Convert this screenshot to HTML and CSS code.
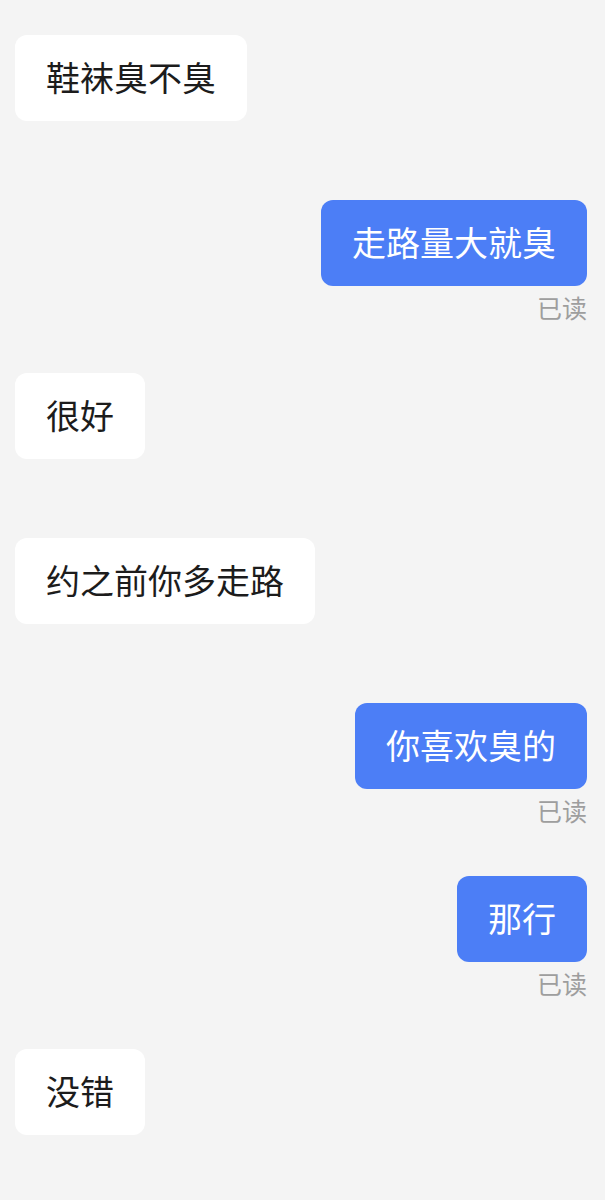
FILE: index.html
```html
<!DOCTYPE html>
<html lang="zh-CN">
<head>
  <meta charset="UTF-8">
  <title>聊天</title>
  <link rel="stylesheet" href="styles.css">
</head>
<body>

<main class="chat">
  <div class="msg in"><div class="bubble">鞋袜臭不臭</div></div>

  <div class="msg out">
    <div class="bubble">走路量大就臭</div>
    <div class="status">已读</div>
  </div>

  <div class="msg in"><div class="bubble">很好</div></div>

  <div class="msg in"><div class="bubble">约之前你多走路</div></div>

  <div class="msg out">
    <div class="bubble">你喜欢臭的</div>
    <div class="status">已读</div>
  </div>

  <div class="msg out">
    <div class="bubble">那行</div>
    <div class="status">已读</div>
  </div>

  <div class="msg in"><div class="bubble">没错</div></div>
</main>

</body>
</html>
```

FILE: styles.css
```css
html, body { margin: 0; background: #f4f4f4; }
body { font-family: "Noto Sans CJK SC", "Noto Sans", sans-serif; color: #1c1c1c; }
.chat { display: flex; flex-direction: column; gap: 79px; padding: 35px 18px 40px 15px; min-height: 1200px; box-sizing: border-box; }
.msg { display: flex; flex-direction: column; }
.msg.in { align-items: flex-start; }
.msg.out { align-items: flex-end; }
.bubble { font-size: 34px; line-height: 46px; padding: 19px 31px 21px; border-radius: 12px; background: #fff; white-space: nowrap; }
.out .bubble { background: #4c7ef6; color: #fff; }
.status { font-size: 25px; line-height: 25px; margin-top: 9px; margin-bottom: -26px; color: #9e9e9e; }
```
